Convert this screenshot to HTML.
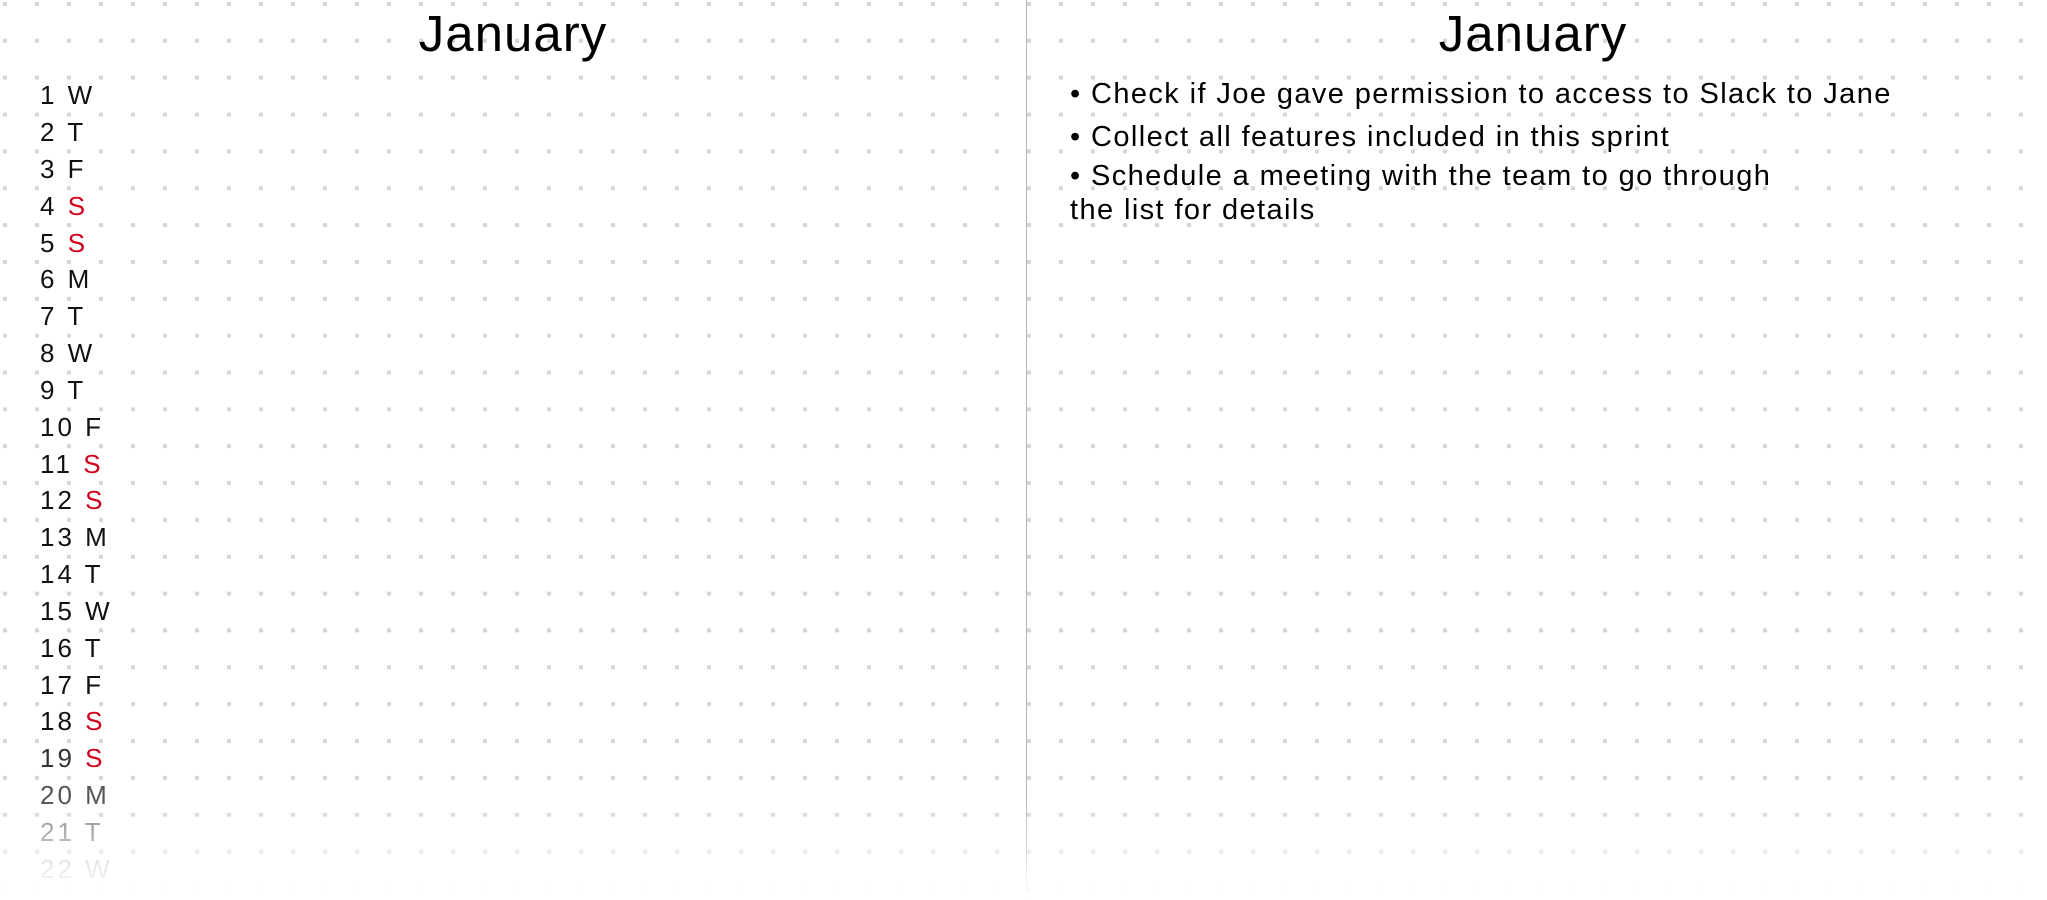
<!DOCTYPE html>
<html><head><meta charset="utf-8"><style>
html,body{margin:0;padding:0;width:2047px;height:900px;overflow:hidden;background:#fff;font-family:"Liberation Sans",sans-serif;}
#bg{position:absolute;left:0;top:0}
.title{position:absolute;top:6px;font-size:51px;color:#000;width:400px;text-align:center;line-height:56px;letter-spacing:1px}
.div{position:absolute;left:1026px;top:0;width:1px;height:900px;background:#b5b5b5}
.row{position:absolute;left:40px;font-size:26px;line-height:30px;color:#111;white-space:pre;letter-spacing:3px}
.r{color:#d0021b}
.note{position:absolute;left:1070px;font-size:29px;line-height:32px;color:#000;white-space:pre;letter-spacing:1.4px}
.fade{position:absolute;left:0;top:800px;width:2047px;height:100px;background:linear-gradient(rgba(255,255,255,0),#fff)}
</style></head><body>
<svg id="bg" width="2047" height="900"><defs><pattern id="p" x="0" y="0" width="32" height="36.85" patternUnits="userSpaceOnUse"><rect x="3" y="2" width="4" height="4" fill="#d6d6d6"/></pattern></defs><rect width="2047" height="900" fill="url(#p)"/></svg>
<div class="div"></div>
<div class="title" style="left:313px">January</div>
<div class="title" style="left:1333px">January</div>
<div class="row" style="top:80px">1 W</div>
<div class="row" style="top:117px">2 T</div>
<div class="row" style="top:154px">3 F</div>
<div class="row" style="top:191px">4 <span class="r">S</span></div>
<div class="row" style="top:228px">5 <span class="r">S</span></div>
<div class="row" style="top:264px">6 M</div>
<div class="row" style="top:301px">7 T</div>
<div class="row" style="top:338px">8 W</div>
<div class="row" style="top:375px">9 T</div>
<div class="row" style="top:412px">10 F</div>
<div class="row" style="top:449px">11 <span class="r">S</span></div>
<div class="row" style="top:485px">12 <span class="r">S</span></div>
<div class="row" style="top:522px">13 M</div>
<div class="row" style="top:559px">14 T</div>
<div class="row" style="top:596px">15 W</div>
<div class="row" style="top:633px">16 T</div>
<div class="row" style="top:670px">17 F</div>
<div class="row" style="top:706px">18 <span class="r">S</span></div>
<div class="row" style="top:743px;color:#333">19 <span class="r">S</span></div>
<div class="row" style="top:780px;color:#555">20 M</div>
<div class="row" style="top:817px;color:#888">21 T</div>
<div class="row" style="top:854px;color:#bbb">22 W</div>
<div class="note" style="top:78px">• Check if Joe gave permission to access to Slack to Jane</div>
<div class="note" style="top:121px">• Collect all features included in this sprint</div>
<div class="note" style="top:160px">• Schedule a meeting with the team to go through</div>
<div class="note" style="top:194px">the list for details</div>
<div class="fade"></div>
</body></html>
